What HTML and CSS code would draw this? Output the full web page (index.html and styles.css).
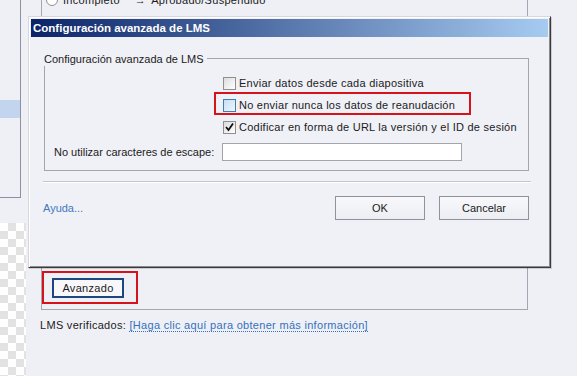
FILE: index.html
```html
<!DOCTYPE html>
<html lang="es">
<head>
    <meta charset="UTF-8">
    <meta name="viewport" content="width=device-width, initial-scale=1.0">
    <title>Configuración avanzada de LMS</title>
    <link rel="stylesheet" href="styles.css">
</head>
<body>

    <div class="page">
        <!-- left tree + stage preview -->
        <aside class="side">
            <div class="tree"><div class="tree-sel"></div></div>
            <div class="checker"></div>
        </aside>

        <!-- quiz / reporting options behind the dialog -->
        <main class="content">
            <section class="opts">
                <div class="radio-row">
                    <span class="radio"></span>
                    <span>Incompleto</span>
                    <span class="arrow">→</span>
                    <span>Aprobado/Suspendido</span>
                </div>
                <div class="mark-box">
                    <button class="btn btn-default">Avanzado</button>
                </div>
            </section>
            <p class="verified">LMS verificados: <a href="#" class="dotted">[Haga clic aquí para obtener más información]</a></p>
        </main>
    </div>

    <!-- Dialog window -->
    <div class="dialog">
        <div class="titlebar">Configuración avanzada de LMS</div>

        <div class="group">
            <div class="group-title"><span>Configuración avanzada de LMS</span></div>
            <div class="group-body">
                <label class="check-row">
                    <span class="check"></span>
                    Enviar datos desde cada diapositiva
                </label>
                <label class="check-row marked">
                    <span class="check check-hover"></span>
                    No enviar nunca los datos de reanudación
                    <span class="mark"></span>
                </label>
                <label class="check-row">
                    <span class="check">
                        <svg width="11" height="11" viewBox="0 0 11 11"><polyline points="2,5 4.5,8 9,1.5" fill="none" stroke="#111" stroke-width="1.8"/></svg>
                    </span>
                    Codificar en forma de URL la versión y el ID de sesión
                </label>
                <span class="field-label">No utilizar caracteres de escape:</span>
                <input type="text" class="field">
            </div>
        </div>

        <div class="sep"></div>

        <div class="footer">
            <a href="#" class="help">Ayuda...</a>
            <div class="actions">
                <button class="btn btn-wide">OK</button>
                <button class="btn btn-wide">Cancelar</button>
            </div>
        </div>
    </div>

</body>
</html>
```

FILE: styles.css
```css
* {
    margin: 0;
    padding: 0;
    box-sizing: border-box;
}
body {
    background: #eff0f6;
    font-family: "Liberation Sans", Arial, sans-serif;
    font-size: 11px;
    color: #1b1b1b;
    overflow: hidden;
    height: 376px;
}
a {
    color: #3470bd;
    text-decoration: none;
}

/* page behind the dialog */
.page {
    display: flex;
}
.side {
    width: 26px;
}
.tree {
    width: 21px;
    height: 198px;
    border-right: 1px solid #8c90a2;
    border-bottom: 1px solid #8c90a2;
    padding-top: 100px;
}
.tree-sel {
    height: 18px;
    background: #c3d5ee;
}
.checker {
    margin-top: 25px;
    height: 160px;
    background-color: #fff;
    background-image: conic-gradient(#e2e2e2 25%, #fff 0 50%, #e2e2e2 0 75%, #fff 0);
    background-size: 16px 16px;
}
.content {
    padding-left: 15px;
}
.opts {
    width: 487px;
    height: 330px;
    margin-top: -20px;
    border: 1px solid #a4a6b1;
    display: flex;
    flex-direction: column;
}
.radio-row {
    display: flex;
    align-items: center;
    gap: 5px;
    margin-top: 11px;
    padding-left: 4px;
    height: 16px;
    letter-spacing: 0.3px;
}
.radio {
    width: 12px;
    height: 12px;
    border: 1px solid #8f8f8f;
    border-radius: 50%;
    background: #fff;
}
.arrow {
    margin-left: 10px;
}
.mark-box {
    margin-top: auto;
    margin-bottom: 5px;
    width: 96px;
    height: 33px;
    border: 2px solid #d6121b;
    padding: 5px 0 0 8px;
}
.verified {
    margin-top: 8px;
    margin-left: -1px;
    line-height: 14px;
    letter-spacing: 0.3px;
}
.dotted {
    border-bottom: 1px dotted #3470bd;
}

/* buttons */
.btn {
    font-family: inherit;
    font-size: 11px;
    color: #1b1b1b;
    background: linear-gradient(#f8f8fb, #eceef3);
    border: 1px solid #8f919c;
}
.btn-default {
    width: 72px;
    height: 20px;
    border: 2px solid #1d477f;
    background: #f8f8fb;
    letter-spacing: 0.3px;
}
.btn-wide {
    width: 90px;
    height: 24px;
}

/* dialog */
.dialog {
    position: absolute;
    left: 28px;
    top: 16px;
    width: 523px;
    height: 252px;
    background: #f0f1f7;
    border: 1px solid;
    border-color: #d8d8dc #3a3a3a #3a3a3a #d8d8dc;
    box-shadow: inset 1px 1px 0 #fff, inset -1px -1px 0 #8a8a8a, 1px 1px 0 rgba(0, 0, 0, 0.15);
    padding: 2px;
}
.titlebar {
    height: 18px;
    line-height: 18px;
    padding-left: 2px;
    color: #fff;
    font-weight: bold;
    font-size: 11.5px;
    background: linear-gradient(to right, #0b2468, #a6cbf1);
}
.group {
    margin: 15px 19px 0 13px;
}
.group-title {
    display: flex;
    align-items: center;
    height: 14px;
    gap: 3px;
}
.group-title::after {
    content: "";
    flex: 1;
    align-self: flex-end;
    height: 7px;
    border-top: 1px solid #a2a4ae;
    border-right: 1px solid #a2a4ae;
}
.group-body {
    display: grid;
    grid-template-columns: 168px 241px;
    padding: 6px 0 9px 9px;
    border: 1px solid #a2a4ae;
    border-top: none;
    height: 105px;
}
.check-row {
    grid-column: 2;
    display: flex;
    align-items: center;
    gap: 3px;
    height: 22px;
    white-space: nowrap;
    letter-spacing: 0.25px;
}
.marked {
    position: relative;
}
.mark {
    position: absolute;
    left: -8px;
    top: -2px;
    width: 257px;
    height: 23px;
    border: 2px solid #d6121b;
}
.check {
    width: 13px;
    height: 13px;
    margin-left: 1px;
    border: 1px solid #8e8f8f;
    background: linear-gradient(135deg, #dcdcdc, #fff);
    display: flex;
    align-items: center;
    justify-content: center;
}
.check-hover {
    border-color: #3c7fb1;
    background: linear-gradient(135deg, #c9dff2, #eef5fc);
}
.field-label {
    margin-top: 5px;
    line-height: 18px;
}
.field {
    margin-top: 5px;
    height: 18px;
    width: 240px;
    border: 1px solid #a3a5ad;
    background: #fff;
}
.sep {
    margin: 10px 17px 0 12px;
    border-top: 1px solid #c5c7cf;
    border-bottom: 1px solid #fff;
}
.footer {
    display: flex;
    align-items: center;
    justify-content: space-between;
    margin: 13px 19px 0 12px;
}
.help {
    color: #3f78be;
}
.actions {
    display: flex;
    gap: 14px;
}
```
